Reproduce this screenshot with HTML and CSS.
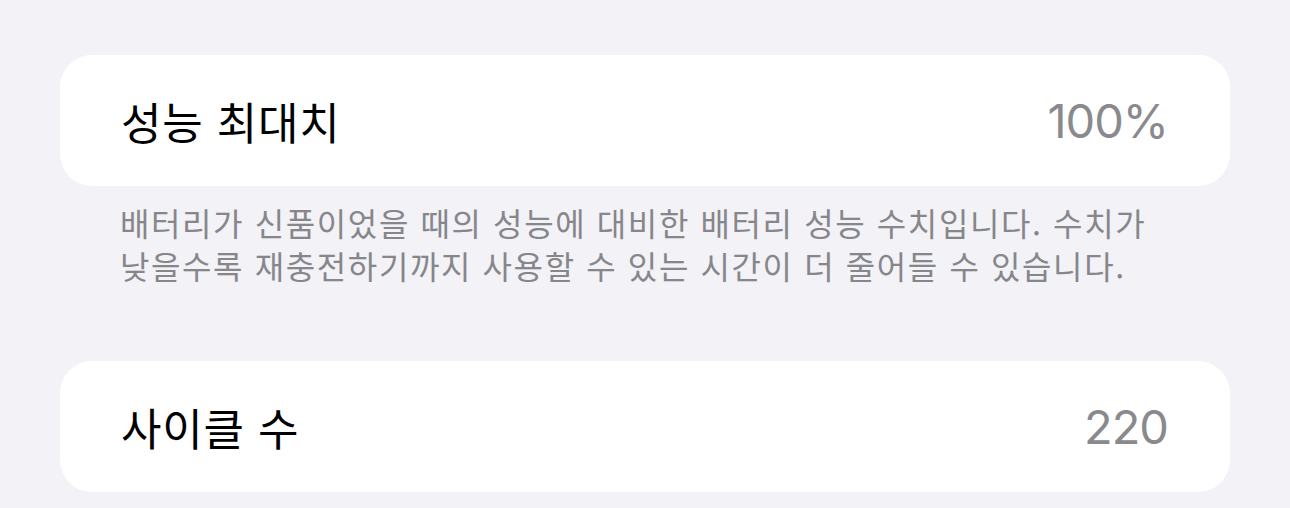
FILE: index.html
```html
<!DOCTYPE html>
<html lang="ko">
<head>
<meta charset="utf-8">
<title>배터리 성능 상태</title>
<link rel="stylesheet" href="styles.css">
</head>
<body>
  <main class="screen">
    <section class="group">
      <div class="cell">
        <span class="cell-title">성능 최대치</span>
        <span class="cell-value">100%</span>
      </div>
      <p class="footer">배터리가 신품이었을 때의 성능에 대비한 배터리 성능 수치입니다. 수치가<br>낮을수록 재충전하기까지 사용할 수 있는 시간이 더 줄어들 수 있습니다.</p>
    </section>
    <section class="group">
      <div class="cell">
        <span class="cell-title">사이클 수</span>
        <span class="cell-value">220</span>
      </div>
    </section>
  </main>
</body>
</html>
```

FILE: styles.css
```css
html, body {
  margin: 0;
  padding: 0;
  background: #f2f2f7;
}

body {
  font-family: "Inter", "Noto Sans CJK KR", sans-serif;
  -webkit-font-smoothing: antialiased;
}

.screen {
  display: flex;
  flex-direction: column;
  padding: 55px 60px 0 60px;
}

.group {
  display: flex;
  flex-direction: column;
}

.cell {
  box-sizing: border-box;
  height: 131px;
  background: #ffffff;
  border-radius: 32px;
  display: flex;
  align-items: center;
  justify-content: space-between;
  padding: 0 62px 0 61px;
}

.cell-title {
  font-size: 44px;
  color: #000000;
  letter-spacing: 0.8px;
}

.cell-value {
  font-size: 47px;
  letter-spacing: -1px;
  color: #8a8a8e;
}

.footer {
  margin: 15px 0 0 0;
  padding: 0 60px;
  height: 160px;
  font-family: "Noto Sans CJK KR", sans-serif;
  font-size: 32px;
  letter-spacing: 1.6px;
  line-height: 43px;
  color: #86868b;
}
```
